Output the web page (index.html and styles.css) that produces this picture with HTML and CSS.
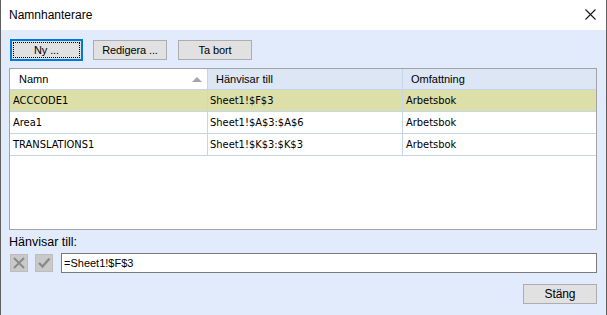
FILE: index.html
```html
<!DOCTYPE html>
<html>
<head>
    <meta charset="UTF-8">
    <title>Namnhanterare</title>
    <link rel="stylesheet" href="styles.css">
</head>
<body>
<div class="win">
    <div class="titlebar">
        <span class="title">Namnhanterare</span>
        <svg class="close" width="11" height="11" viewBox="0 0 11 11">
            <path d="M0.5 0.5 L10.5 10.5 M10.5 0.5 L0.5 10.5" stroke="#1a1a1a" stroke-width="1.1" fill="none"/>
        </svg>
    </div>
    <div class="content">
        <div class="toolbar">
            <button class="btn btn-focus"><span>Ny ...</span></button>
            <button class="btn btn-edit">Redigera ...</button>
            <button class="btn btn-del">Ta bort</button>
        </div>
        <div class="list">
            <table class="grid">
                <thead>
                <tr>
                    <th class="sorted">Namn<em class="arrow"></em></th>
                    <th>Hänvisar till</th>
                    <th>Omfattning</th>
                </tr>
                </thead>
                <tbody>
                <tr class="sel">
                    <td class="c1">ACCCODE1</td>
                    <td class="c2">Sheet1!$F$3</td>
                    <td class="c3">Arbetsbok</td>
                </tr>
                <tr>
                    <td class="c1">Area1</td>
                    <td class="c2">Sheet1!$A$3:$A$6</td>
                    <td class="c3">Arbetsbok</td>
                </tr>
                <tr>
                    <td class="c1">TRANSLATIONS1</td>
                    <td class="c2">Sheet1!$K$3:$K$3</td>
                    <td class="c3">Arbetsbok</td>
                </tr>
                </tbody>
            </table>
        </div>
        <div class="label">Hänvisar till:</div>
        <div class="editor">
            <span class="ico">
                <svg width="16" height="16" viewBox="0 0 16 16">
                    <path d="M3 3 L13 13 M13 3 L3 13" stroke="#8a8a8a" stroke-width="2" fill="none"/>
                </svg>
            </span>
            <span class="ico">
                <svg width="16" height="16" viewBox="0 0 16 16">
                    <path d="M3 8 L6.5 11.5 L13.5 3.5" stroke="#8a8a8a" stroke-width="2.4" fill="none"/>
                </svg>
            </span>
            <div class="ref">=Sheet1!$F$3</div>
        </div>
        <div class="footer">
            <button class="btn btn-close">Stäng</button>
        </div>
    </div>
</div>
</body>
</html>
```

FILE: styles.css
```css
html, body {
    margin: 0;
    padding: 0;
    background: #ffffff;
}

body, div, span, table, th, td, button {
    font-family: "Liberation Sans", Arial, sans-serif;
    color: #000;
}

.win {
    width: 605px;
    height: 315px;
    border-left: 1px solid #5f5f5f;
    border-right: 1px solid #5f5f5f;
    display: flex;
    flex-direction: column;
}

.titlebar {
    height: 30px;
    display: flex;
    align-items: center;
    justify-content: space-between;
    background: #fff;
}

.title {
    padding-left: 8px;
    font-size: 12px;
}

.close {
    margin-right: 10px;
    margin-top: -2px;
}

.content {
    flex: 1;
    background: #e1ebfc;
    padding: 0 9px 0 8px;
    display: flex;
    flex-direction: column;
}

/* buttons */
.toolbar {
    display: flex;
    align-items: center;
    height: 22px;
    margin-top: 9px;
    padding-left: 1px;
}

.btn {
    height: 20px;
    padding: 0;
    margin: 0;
    border: 1px solid #adadad;
    background: #e1e1e1;
    font-size: 11px;
    letter-spacing: -0.1px;
}

.btn-focus {
    width: 73px;
    height: 22px;
    border: 2px solid #0078d7;
    padding: 1px;
    display: flex;
}

.btn-focus span {
    flex: 1;
    border: 1px dotted #000;
    display: flex;
    align-items: center;
    justify-content: center;
}

.btn-edit {
    width: 74px;
    margin-left: 10px;
}

.btn-del {
    width: 74px;
    margin-left: 11px;
}

/* list */
.list {
    margin-top: 7px;
    height: 160px;
    border: 1px solid #a3a3a3;
    background: #fff;
}

.grid {
    width: 100%;
    border-collapse: collapse;
    table-layout: fixed;
}

.grid th {
    height: 20px;
    padding: 0 0 0 8px;
    text-align: left;
    font-weight: normal;
    font-size: 11px;
    background: #dce6f4;
    border-right: 1px solid #c5d5ea;
    border-bottom: 1px solid #c5d5ea;
    position: relative;
}

.grid th.sorted {
    width: 188px;
    padding-left: 9px;
    background: #fff;
}

.grid th:nth-child(2) {
    width: 186px;
}

.grid th:last-child {
    border-right: none;
}

.arrow {
    position: absolute;
    right: 5px;
    top: 8px;
    width: 0;
    height: 0;
    border-left: 5px solid transparent;
    border-right: 5px solid transparent;
    border-bottom: 5px solid #a6a6a6;
}

.grid td {
    height: 21px;
    padding: 0 0 0 3px;
    font-family: "DejaVu Sans Condensed", "DejaVu Sans", sans-serif;
    font-size: 11px;
    border-right: 1px solid #c5d5ea;
    border-bottom: 1px solid #c5d5ea;
    white-space: nowrap;
    overflow: hidden;
}

.grid td.c2 {
    padding-left: 2px;
}

.grid td.c3 {
    border-right: none;
}

.grid tr.sel td {
    background: #dcdfa8;
}

/* reference editor */
.label {
    margin-top: 5px;
    font-size: 12.5px;
    line-height: 15px;
}

.editor {
    display: flex;
    align-items: center;
    margin-top: 3px;
    height: 20px;
}

.ico {
    width: 18px;
    height: 18px;
    box-sizing: border-box;
    background: #c9c9c9;
    border: 1px solid #bdbdbd;
    display: flex;
    align-items: center;
    justify-content: center;
    margin-left: 7px;
}

.ico:first-child {
    margin-left: 1px;
}

.ref {
    flex: 1;
    margin-left: 8px;
    height: 20px;
    box-sizing: border-box;
    border: 1px solid #7a7a7a;
    background: #fff;
    font-size: 11px;
    line-height: 18px;
    padding-left: 2px;
}

.footer {
    display: flex;
    justify-content: flex-end;
    margin-top: 11px;
}

.btn-close {
    width: 74px;
    font-size: 12px;
}
```
